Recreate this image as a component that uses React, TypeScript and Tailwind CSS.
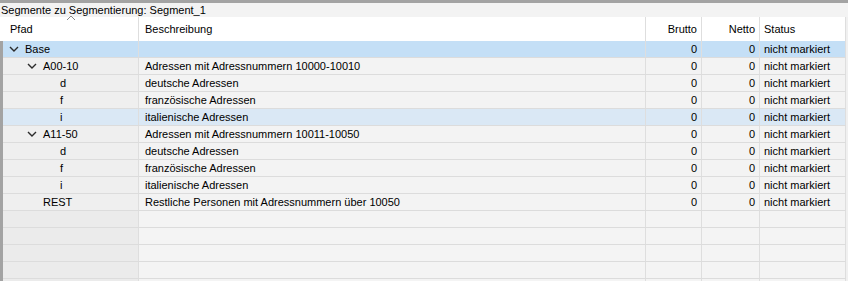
import React from "react";

type Row = {
  level: number;
  expandable?: boolean;
  path: string;
  desc: string;
  tone?: "selected" | "hover";
};

const rows: Row[] = [
  { level: 0, expandable: true, path: "Base", desc: "", tone: "selected" },
  { level: 1, expandable: true, path: "A00-10", desc: "Adressen mit Adressnummern 10000-10010" },
  { level: 2, path: "d", desc: "deutsche Adressen" },
  { level: 2, path: "f", desc: "französische Adressen" },
  { level: 2, path: "i", desc: "italienische Adressen", tone: "hover" },
  { level: 1, expandable: true, path: "A11-50", desc: "Adressen mit Adressnummern 10011-10050" },
  { level: 2, path: "d", desc: "deutsche Adressen" },
  { level: 2, path: "f", desc: "französische Adressen" },
  { level: 2, path: "i", desc: "italienische Adressen" },
  { level: 1, path: "REST", desc: "Restliche Personen mit Adressnummern über 10050" },
];

const indent = ["pl-[6px]", "pl-[24px]", "pl-[41px]"];

function Chevron() {
  return (
    <svg width="10" height="6" viewBox="0 0 10 6" className="shrink-0">
      <path d="M1 1 L5 5 L9 1" fill="none" stroke="#2b2b2b" strokeWidth="1.4" />
    </svg>
  );
}

const cols = "grid grid-cols-[136px_507px_56px_58px_86px]";
const cell = "h-full border-r border-[#dedede] flex items-center overflow-hidden whitespace-nowrap";

export default function App() {
  return (
    <div
      className="relative w-[848px] h-[281px] overflow-hidden bg-[#f0f0f0] border-t-[3px] border-[#a3a3a3] text-[11px] leading-[16px] text-black"
      style={{ fontFamily: '"Liberation Sans", Arial, sans-serif' }}
    >
      {/* caption */}
      <div className="h-[14px] leading-[14px] pl-[1px] bg-[#f3f3f3]">Segmente zu Segmentierung: Segment_1</div>

      {/* sort indicator on the Pfad column */}
      <svg width="10" height="6" viewBox="0 0 10 6" className="absolute left-[66px] top-[12px]">
        <path d="M1 5 L5 1 L9 5" fill="none" stroke="#8a8a8a" strokeWidth="1" />
      </svg>

      <div className="flex">
        <div className="w-[846px] flex flex-col">
          {/* header */}
          <div className="pl-[3px] bg-white">
            <div className={`${cols} h-[24px]`}>
              <div className={`${cell} pl-[7px]`}>Pfad</div>
              <div className={`${cell} pl-[6px]`}>Beschreibung</div>
              <div className={`${cell} justify-end pr-[4px]`}>Brutto</div>
              <div className={`${cell} justify-end pr-[4px]`}>Netto</div>
              <div className={`${cell} pl-[4px]`}>Status</div>
            </div>
          </div>

          <div className="border-l-[3px] border-[#a3a3a3] flex flex-col">
            {rows.map((r, i) => {
              const bg =
                r.tone === "selected"
                  ? "bg-[#c4dff6]"
                  : r.tone === "hover"
                  ? "bg-[#dae8f5]"
                  : "bg-[#f3f3f3]";
              const pathBg = r.tone ? "" : "bg-[#efefef]";
              return (
                <div key={i} className={`${cols} h-[17px] border-b border-[#dcdcdc] ${bg}`}>
                  <div className={`${cell} ${pathBg} ${indent[r.level]}`}>
                    <span className="w-[16px] flex items-center">{r.expandable ? <Chevron /> : null}</span>
                    <span>{r.path}</span>
                  </div>
                  <div className={`${cell} pl-[6px]`}>{r.desc}</div>
                  <div className={`${cell} justify-end pr-[4px]`}>0</div>
                  <div className={`${cell} justify-end pr-[4px]`}>0</div>
                  <div className={`${cell} pl-[4px]`}>nicht markiert</div>
                </div>
              );
            })}
            {Array.from({ length: 5 }).map((_, i) => (
              <div key={`e${i}`} className={`${cols} h-[17px] border-b border-[#dcdcdc] bg-[#f4f4f4]`}>
                <div className={`${cell} bg-[#ebebeb]`} />
                <div className={cell} />
                <div className={cell} />
                <div className={cell} />
                <div className={cell} />
              </div>
            ))}
          </div>
        </div>
        <div className="flex-1 bg-[#f0f0f0]" />
      </div>
    </div>
  );
}
